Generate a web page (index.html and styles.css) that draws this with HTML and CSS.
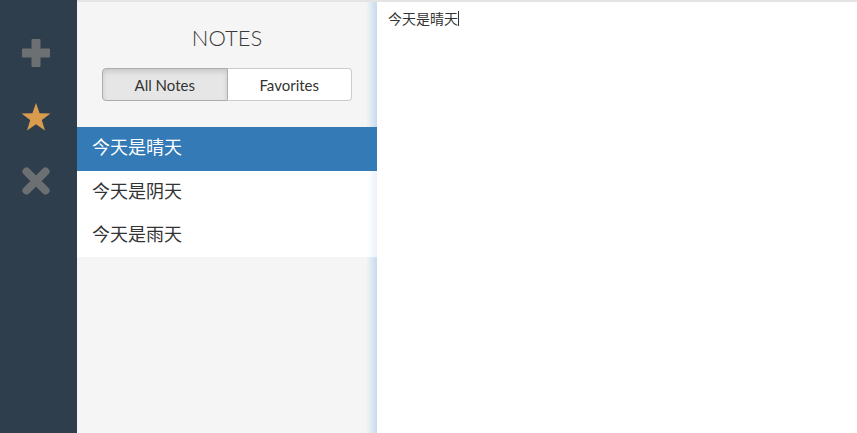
FILE: index.html
```html
<!DOCTYPE html>
<html lang="zh">
<head>
<meta charset="utf-8">
<title>Notes</title>
<link rel="stylesheet" href="styles.css">
</head>
<body>
<div class="app">
  <nav class="toolbar">
    <div class="tool">
      <svg width="30" height="30" viewBox="0 0 30 30"><path d="M11 1.5h8v9.5h9.5v8H19v9.5h-8V19H1.5v-8H11z" fill="#6d7073" stroke="#6d7073" stroke-width="1" stroke-linejoin="round"/></svg>
    </div>
    <div class="tool">
      <svg width="32" height="30" viewBox="0 0 32 30"><polygon points="16,1 19.6,11.2 30.5,11.4 21.8,18 25,28.6 16,22.3 7,28.6 10.2,18 1.5,11.4 12.4,11.2" fill="#d99c4e"/></svg>
    </div>
    <div class="tool">
      <svg width="30" height="30" viewBox="0 0 30 30"><g stroke="#6d7073" stroke-width="8" stroke-linecap="round"><line x1="5.5" y1="5.5" x2="24.5" y2="24.5"/><line x1="24.5" y1="5.5" x2="5.5" y2="24.5"/></g></svg>
    </div>
  </nav>
  <section class="notes-panel">
    <h1 class="notes-title">NOTES</h1>
    <div class="btn-group">
      <button class="btn btn-active">All Notes</button>
      <button class="btn">Favorites</button>
    </div>
    <ul class="note-list">
      <li class="note-item note-selected">今天是晴天</li>
      <li class="note-item">今天是阴天</li>
      <li class="note-item">今天是雨天</li>
    </ul>
  </section>
  <main class="editor">
    <div class="editor-text">今天是晴天<span class="caret"></span></div>
  </main>
</div>
</body>
</html>
```

FILE: styles.css
```css
html, body {
  margin: 0;
  padding: 0;
  height: 100%;
}
body {
  font-family: Lato, "Noto Sans CJK SC", sans-serif;
  color: #333;
  background: #fff;
}
.app {
  display: flex;
  height: 100vh;
}
.toolbar {
  width: 77px;
  flex: none;
  background: #2f3e4c;
  display: flex;
  flex-direction: column;
  padding-top: 21px;
  box-sizing: border-box;
}
.tool {
  height: 64px;
  display: flex;
  align-items: center;
  justify-content: center;
  padding-right: 5px;
  box-sizing: border-box;
}
.tool svg { display: block; }
.notes-panel {
  width: 300px;
  flex: none;
  background: linear-gradient(to right, #f5f5f5 calc(100% - 11px), #c6dbee);
  border-top: 2px solid #e4e4e4;
  padding-top: 21px;
  box-sizing: border-box;
  display: flex;
  flex-direction: column;
}
.notes-title {
  margin: 0;
  font-family: Lato, sans-serif;
  font-weight: 300;
  font-size: 22px;
  line-height: 29px;
  text-align: center;
  color: #3a3a3a;
}
.btn-group {
  display: flex;
  align-self: center;
  margin-top: 16px;
  width: 250px;
}
.btn {
  flex: 1;
  height: 33px;
  font-family: Lato, sans-serif;
  font-size: 15px;
  color: #333;
  background: #fff;
  border: 1px solid #ccc;
  padding: 0;
  margin: 0;
}
.btn:first-child {
  border-radius: 4px 0 0 4px;
}
.btn:last-child {
  border-radius: 0 4px 4px 0;
  border-left: none;
}
.btn-active {
  background: #e6e6e6;
  border-color: #adadad;
  box-shadow: inset 0 3px 5px rgba(0,0,0,0.125);
}
.note-list {
  list-style: none;
  margin: 26px 0 0;
  padding: 0;
  background: linear-gradient(to right, #fff calc(100% - 9px), #eaf1f8);
}
.note-item {
  height: 43px;
  line-height: 38px;
  padding: 0 15px 5px;
  font-size: 18px;
  color: #333;
  box-sizing: border-box;
  font-family: "Noto Sans CJK SC", sans-serif;
}
.note-selected {
  height: 44px;
  background: #337ab7;
  color: #fff;
}
.editor {
  flex: 1;
  border-top: 2px solid #e4e4e4;
  background: #fff;
}
.editor-text {
  padding: 6px 11px;
  font-size: 14px;
  line-height: 20px;
  font-family: "Noto Sans CJK SC", sans-serif;
  color: #333;
}
.caret {
  display: inline-block;
  width: 1px;
  height: 15px;
  background: #333;
  vertical-align: -2px;
}
```
